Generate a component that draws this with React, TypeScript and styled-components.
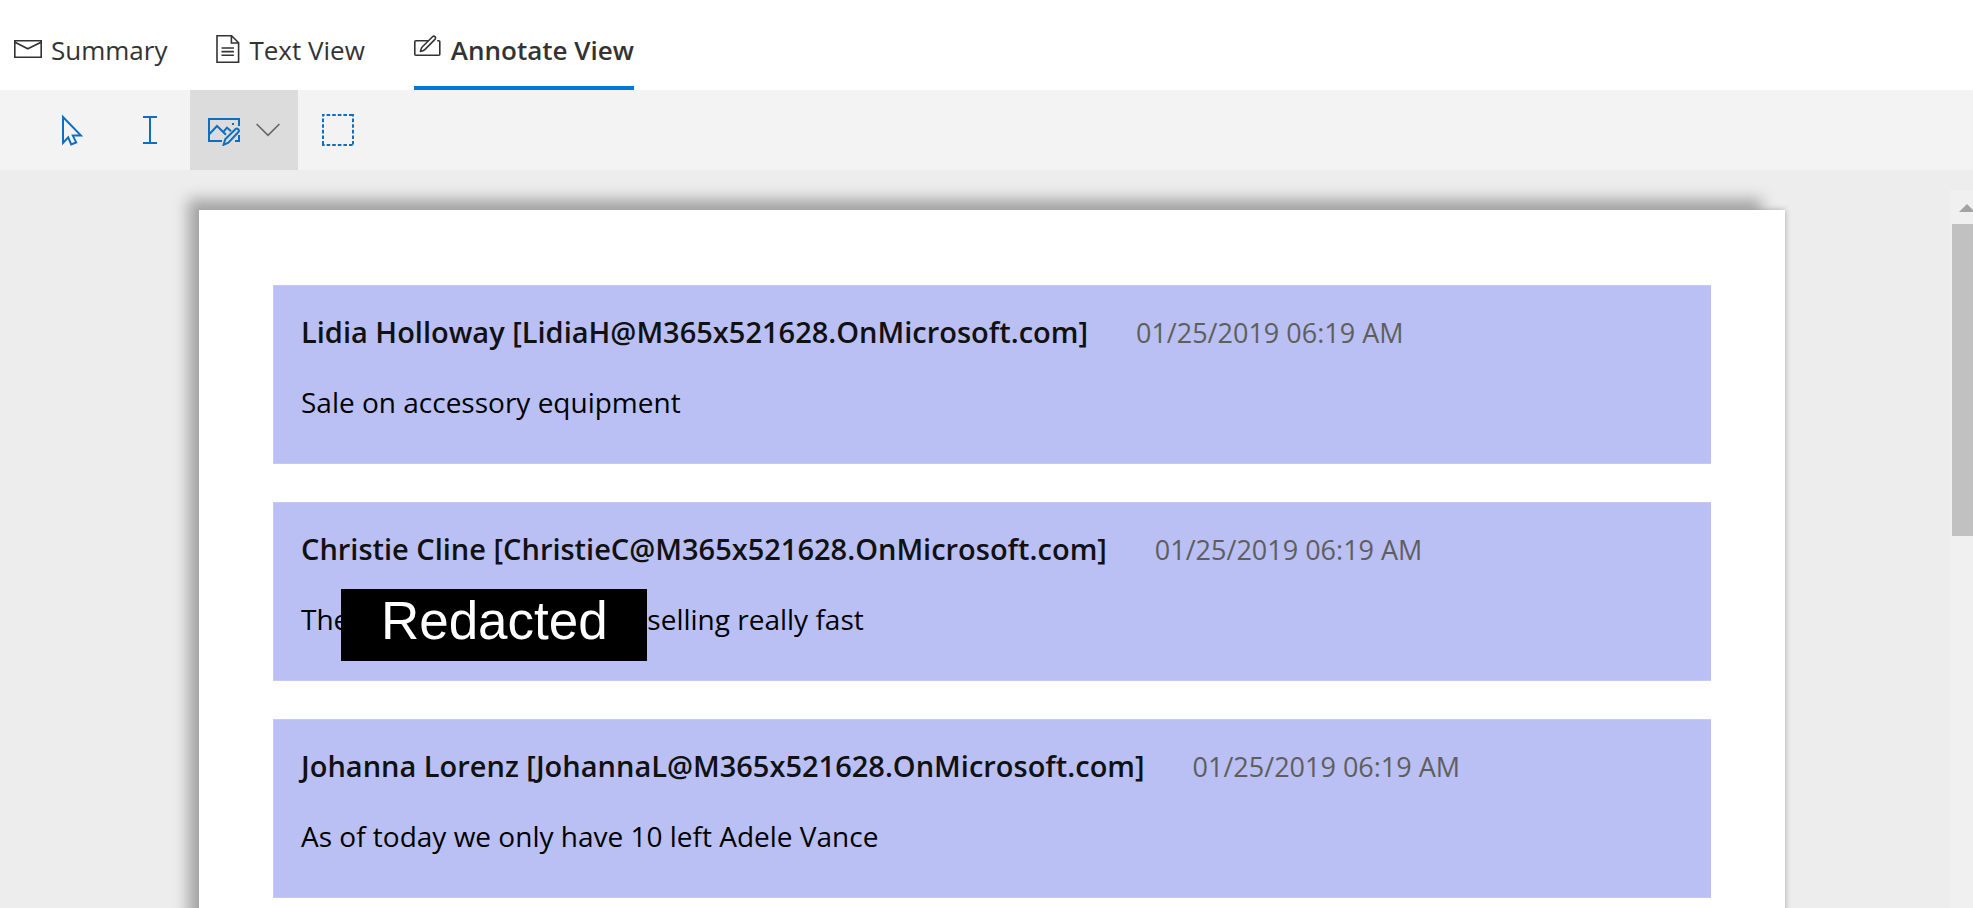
import React from "react";
import styled, { createGlobalStyle } from "styled-components";

const GlobalStyle = createGlobalStyle`
  * { box-sizing: border-box; }
  body {
    margin: 0;
    background: #fff;
    color: #333;
    font-family: "Segoe UI", "Open Sans", "Noto Sans", sans-serif;
  }
  button { font: inherit; color: inherit; border: 0; background: none; padding: 0; }
  svg { display: block; flex: none; }
`;

const Shell = styled.div`
  display: flex;
  flex-direction: column;
  height: 100vh;
  overflow: hidden;
`;

const TabBar = styled.div`
  display: flex;
  flex: none;
  gap: 49px;
  height: 90px;
  padding: 14px 14px 0;
  background: #fff;
`;

const Tab = styled.button<{ $active?: boolean }>`
  display: flex;
  align-items: center;
  gap: 9px;
  padding-bottom: ${(p) => (p.$active ? 0 : 4)}px;
  border-bottom: ${(p) => (p.$active ? "4px solid #0078d7" : "0")};
  font-size: 26px;
  font-weight: ${(p) => (p.$active ? 600 : 400)};
  line-height: 36px;
  white-space: nowrap;
`;

const Toolbar = styled.div`
  display: flex;
  flex: none;
  gap: 2px;
  height: 80px;
  padding-left: 34px;
  background: #f3f3f3;
  color: #106ebe;
`;

const Tool = styled.button<{ $active?: boolean }>`
  display: flex;
  align-items: center;
  justify-content: center;
  gap: 16px;
  width: ${(p) => (p.$active ? 108 : 76)}px;
  background: ${(p) => (p.$active ? "#dcdcdc" : "transparent")};
`;

const Viewer = styled.main`
  display: flex;
  flex: 1;
  min-height: 0;
  padding-top: 20px;
  background: #ededed;
`;

const Canvas = styled.div`
  flex: 1;
  min-width: 0;
  padding: 20px 165px 0 199px;
`;

const Sheet = styled.article`
  display: flex;
  flex-direction: column;
  gap: 38px;
  min-height: 100%;
  padding: 75px 74px;
  background: #fff;
  box-shadow: -17px -17px 14px -6px #a5a5a5, 0 0 6px rgba(0, 0, 0, 0.3);
`;

const Message = styled.section`
  height: 179px;
  padding: 27px 27px;
  background: #bac0f4;
  border: 1px solid #c4c9f6;
  border-right: 0;
`;

const MessageHead = styled.header`
  display: flex;
  align-items: baseline;
  gap: 48px;
  font-size: 27px;
  line-height: 38px;
  white-space: nowrap;
`;

const Sender = styled.h2`
  margin: 0;
  font-size: 29px;
  font-weight: 600;
  line-height: 38px;
  color: #111;
`;

const Sent = styled.time`
  color: #605e5c;
`;

const Body = styled.p`
  margin: 31px 0 0;
  font-size: 28px;
  line-height: 38px;
  color: #000;
  white-space: nowrap;
`;

const Covered = styled.span`
  position: relative;
  display: inline-block;
  width: 298px;
  height: 38px;
  vertical-align: bottom;
`;

const Redaction = styled.span`
  position: absolute;
  top: -11px;
  left: -8px;
  width: 306px;
  height: 72px;
  background: #000;
  color: #fff;
  font-family: "Liberation Sans", Arial, sans-serif;
  font-size: 53px;
  line-height: 63px;
  text-align: center;
`;

const ScrollBar = styled.div`
  display: flex;
  flex-direction: column;
  flex: none;
  width: 23px;
  overflow: hidden;
  background: #f0f0f0;
`;

const ScrollUp = styled.button`
  display: flex;
  height: 34px;
  padding: 14px 0 0 9px;
`;

const Thumb = styled.div`
  height: 312px;
  margin-left: 2px;
  background: #c1c1c1;
`;

const MailIcon = () => (
  <svg width="28" height="36" viewBox="0 0 28 36" fill="none" stroke="#333" strokeWidth="1.6">
    <path d="M.8 8.8h26.4v16.4H.8zM1 10.2l12.8 6.6L27 10.2" />
  </svg>
);

const DocumentIcon = () => (
  <svg width="24" height="36" viewBox="0 0 24 36" fill="none" stroke="#333" strokeWidth="1.6">
    <path d="M1 3.8h14.6l7 7v19.4H1zM15.4 4v7h7M5.5 16h12.4M5.5 19.6h12.4M5.5 23.2h12.4" />
  </svg>
);

const AnnotateIcon = () => (
  <svg width="28" height="36" viewBox="0 0 28 36" fill="none" stroke="#333" strokeWidth="1.6" strokeLinejoin="round">
    <path d="M14 8.8H1.8q-1 0-1 1v12.4q0 1 1 1h23q1 0 1-1V9.8q0-1-1-1h-1.6" />
    <path d="M6.4 19.4c.4-2 .8-3.400 2-4.600L18.800 4.500c1.200-1.200 3.800.8 2.400 2.600L10.800 17.600c-1.200 1.200-2.600 1.600-4.400 1.800z" />
  </svg>
);

const PointerIcon = () => (
  <svg width="22" height="32" viewBox="0 0 22 32" fill="none" stroke="currentColor" strokeWidth="2">
    <path d="M2 3v26l5.200-5.600 3 7 5-2-3.400-6.800H20z" />
  </svg>
);

const TextCursorIcon = () => (
  <svg width="14" height="28" viewBox="0 0 14 28" fill="none" stroke="currentColor" strokeWidth="2">
    <path d="M0 1h14M0 27h14M7 1v26" />
  </svg>
);

const RedactIcon = () => (
  <svg width="32" height="32" viewBox="0 -4 32 32" fill="none" stroke="currentColor" strokeWidth="2">
    <path d="M31 8V1H1v22h13M27 23h4v-6" />
    <path d="M1.500 16 9 8l9 8.800M15.600 13.600 19 9.600l4 3.600" />
    <path d="M15.600 26.800l1.600-5.600L27.600 11c1.600-1.400 4.400 1 2.800 3L20.400 24.600z" />
    <path d="M24 6h2" />
  </svg>
);

const ChevronIcon = () => (
  <svg width="24" height="14" viewBox="0 0 24 14" fill="none" stroke="#666" strokeWidth="1.600">
    <path d="M.6 1 12 12.400 23.400 1" />
  </svg>
);

const AreaIcon = () => (
  <svg width="32" height="32" viewBox="0 0 32 32" fill="none" stroke="currentColor" strokeWidth="2">
    <path d="M0 1h32M0 31h32" strokeDasharray="3.600 2" strokeDashoffset="1" />
    <path d="M1 0v32M31 0v32" strokeDasharray="3.600 2" strokeDashoffset="1" />
  </svg>
);

const UpArrow = () => (
  <svg width="16" height="8" viewBox="0 0 16 8" fill="#a3a3a3">
    <path d="M8 0l8 8H0z" />
  </svg>
);

const messages: { sender: string; body: React.ReactNode }[] = [
  { sender: "Lidia Holloway [LidiaH@M365x521628.OnMicrosoft.com]", body: "Sale on accessory equipment" },
  {
    sender: "Christie Cline [ChristieC@M365x521628.OnMicrosoft.com]",
    body: (
      <>
        The
        <Covered>
          <Redaction>Redacted</Redaction>
        </Covered>
        selling really fast
      </>
    ),
  },
  { sender: "Johanna Lorenz [JohannaL@M365x521628.OnMicrosoft.com]", body: "As of today we only have 10 left Adele Vance" },
];

export default function App() {
  return (
    <Shell>
      <GlobalStyle />
      <TabBar role="tablist">
        <Tab role="tab" aria-selected={false}>
          <MailIcon />
          Summary
        </Tab>
        <Tab role="tab" aria-selected={false}>
          <DocumentIcon />
          Text View
        </Tab>
        <Tab role="tab" aria-selected $active>
          <AnnotateIcon />
          Annotate View
        </Tab>
      </TabBar>
      <Toolbar role="toolbar">
        <Tool aria-label="Select">
          <PointerIcon />
        </Tool>
        <Tool aria-label="Select text">
          <TextCursorIcon />
        </Tool>
        <Tool aria-label="Redaction" aria-pressed $active>
          <RedactIcon />
          <ChevronIcon />
        </Tool>
        <Tool aria-label="Select area">
          <AreaIcon />
        </Tool>
      </Toolbar>
      <Viewer>
        <Canvas>
          <Sheet>
            {messages.map((m) => (
              <Message key={m.sender}>
                <MessageHead>
                  <Sender>{m.sender}</Sender>
                  <Sent dateTime="2019-01-25T06:19">01/25/2019 06:19 AM</Sent>
                </MessageHead>
                <Body>{m.body}</Body>
              </Message>
            ))}
          </Sheet>
        </Canvas>
        <ScrollBar>
          <ScrollUp aria-label="Scroll up">
            <UpArrow />
          </ScrollUp>
          <Thumb />
        </ScrollBar>
      </Viewer>
    </Shell>
  );
}
